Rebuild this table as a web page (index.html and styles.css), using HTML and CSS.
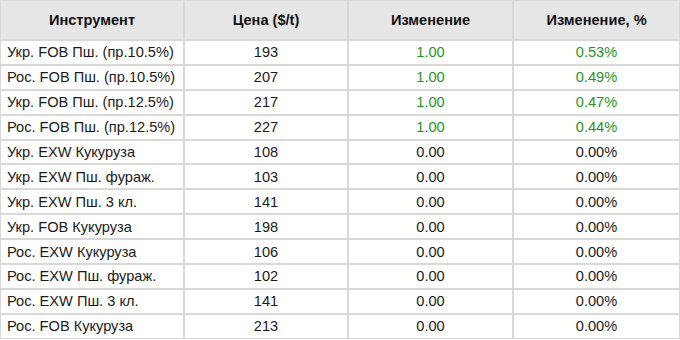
FILE: index.html
```html
<!DOCTYPE html>
<html lang="ru">
<head>
<meta charset="utf-8">
<link rel="stylesheet" href="styles.css">
</head>
<body>
<table class="quotes">
  <colgroup>
    <col class="c1"><col class="c2"><col class="c3"><col class="c4">
  </colgroup>
  <thead>
    <tr><th>Инструмент</th><th>Цена ($/t)</th><th>Изменение</th><th>Изменение, %</th></tr>
  </thead>
  <tbody>
    <tr><td class="name">Укр. FOB Пш. (пр.10.5%)</td><td>193</td><td class="up">1.00</td><td class="up">0.53%</td></tr>
    <tr><td class="name">Рос. FOB Пш. (пр.10.5%)</td><td>207</td><td class="up">1.00</td><td class="up">0.49%</td></tr>
    <tr><td class="name">Укр. FOB Пш. (пр.12.5%)</td><td>217</td><td class="up">1.00</td><td class="up">0.47%</td></tr>
    <tr><td class="name">Рос. FOB Пш. (пр.12.5%)</td><td>227</td><td class="up">1.00</td><td class="up">0.44%</td></tr>
    <tr><td class="name">Укр. EXW Кукуруза</td><td>108</td><td>0.00</td><td>0.00%</td></tr>
    <tr><td class="name">Укр. EXW Пш. фураж.</td><td>103</td><td>0.00</td><td>0.00%</td></tr>
    <tr><td class="name">Укр. EXW Пш. 3 кл.</td><td>141</td><td>0.00</td><td>0.00%</td></tr>
    <tr><td class="name">Укр. FOB Кукуруза</td><td>198</td><td>0.00</td><td>0.00%</td></tr>
    <tr><td class="name">Рос. EXW Кукуруза</td><td>106</td><td>0.00</td><td>0.00%</td></tr>
    <tr><td class="name">Рос. EXW Пш. фураж.</td><td>102</td><td>0.00</td><td>0.00%</td></tr>
    <tr><td class="name">Рос. EXW Пш. 3 кл.</td><td>141</td><td>0.00</td><td>0.00%</td></tr>
    <tr><td class="name">Рос. FOB Кукуруза</td><td>213</td><td>0.00</td><td>0.00%</td></tr>
  </tbody>
</table>
</body>
</html>
```

FILE: styles.css
```css
html, body {
  margin: 0;
  padding: 0;
  background: #ffffff;
}
.quotes {
  width: 680px;
  border-collapse: separate;
  border-spacing: 0;
  table-layout: fixed;
  font-family: "Liberation Sans", Arial, sans-serif;
  font-size: 14.6px;
  color: #1a1a1a;
}
.c1 { width: 184px; }
.c2 { width: 164px; }
.c3 { width: 165px; }
.c4 { width: 167px; }
.quotes th,
.quotes td {
  border: 1px solid #d8d8d8;
  text-align: center;
  padding: 0 6px;
  white-space: nowrap;
}
.quotes th {
  height: 38px;
  background: #e6e6e6;
  font-weight: bold;
  color: #111111;
}
.quotes td {
  height: 22.9px;
}
.quotes td.name {
  text-align: left;
}
.quotes td.up {
  color: #1f961f;
}
```
